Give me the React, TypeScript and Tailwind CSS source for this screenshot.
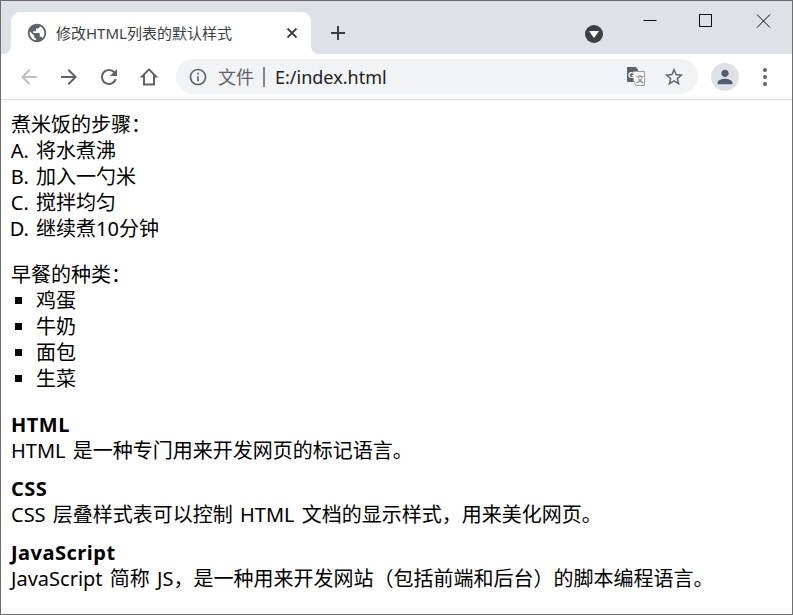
const UI = "font-['Noto_Sans','Noto_Sans_CJK_SC',sans-serif]";

function Icon({ d, size = 24, className = "" }: { d: string; size?: number; className?: string }) {
  return (
    <svg width={size} height={size} viewBox="0 0 24 24" fill="currentColor" className={`shrink-0 ${className}`}>
      <path d={d} />
    </svg>
  );
}

const GLOBE = "M12 2C6.48 2 2 6.48 2 12s4.48 10 10 10 10-4.48 10-10S17.52 2 12 2zm-1 17.93c-3.95-.49-7-3.85-7-7.93 0-.62.08-1.21.21-1.79L9 15v1c0 1.1.9 2 2 2v1.93zm6.9-2.54c-.26-.81-1-1.39-1.9-1.39h-1v-3c0-.55-.45-1-1-1H8v-2h2c.55 0 1-.45 1-1V7h2c1.1 0 2-.9 2-2v-.41c2.93 1.19 5 4.06 5 7.41 0 2.08-.8 3.97-2.1 5.39z";
const BACK = "M20 11H7.83l5.59-5.59L12 4l-8 8 8 8 1.41-1.41L7.83 13H20v-2z";
const FORWARD = "M4 11h12.17l-5.59-5.59L12 4l8 8-8 8-1.41-1.41L16.17 13H4v-2z";
const RELOAD = "M17.65 6.35C16.2 4.9 14.21 4 12 4c-4.42 0-7.99 3.58-7.99 8s3.57 8 7.99 8c3.73 0 6.84-2.55 7.73-6h-2.08c-.82 2.33-3.04 4-5.65 4-3.31 0-6-2.69-6-6s2.69-6 6-6c1.66 0 3.14.69 4.22 1.78L13 11h7V4l-2.35 2.35z";
const INFO = "M11 7h2v2h-2zm0 4h2v6h-2zm1-9C6.48 2 2 6.48 2 12s4.48 10 10 10 10-4.48 10-10S17.52 2 12 2zm0 18c-4.41 0-8-3.59-8-8s3.59-8 8-8 8 3.59 8 8-3.59 8-8 8z";
const STAR = "M22 9.24l-7.19-.62L12 2 9.19 8.63 2 9.24l5.46 4.73L5.82 21 12 17.27 18.18 21l-1.63-7.03L22 9.24zM12 15.4l-3.76 2.27 1-4.28-3.32-2.88 4.38-.38L12 6.1l1.71 4.04 4.38.38-3.32 2.88 1 4.28L12 15.4z";
const PERSON = "M12 12c2.21 0 4-1.79 4-4s-1.79-4-4-4-4 1.79-4 4 1.79 4 4 4zm0 2c-2.67 0-8 1.34-8 4v2h16v-2c0-2.66-5.33-4-8-4z";

function TabStrip() {
  return (
    <div className="flex h-[53px] bg-[#dee1e6]">
      <div className="relative ml-[10px] mt-[11px] flex h-[42px] w-[300px] items-center rounded-t-[9px] bg-white pl-[15px] pr-[13px]">
        <div className="absolute -left-[8px] bottom-0 h-[8px] w-[8px] bg-white">
          <div className="h-full w-full rounded-br-[8px] bg-[#dee1e6]" />
        </div>
        <div className="absolute -right-[8px] bottom-0 h-[8px] w-[8px] bg-white">
          <div className="h-full w-full rounded-bl-[8px] bg-[#dee1e6]" />
        </div>
        <Icon d={GLOBE} size={22} className="text-[#5f6368]" />
        <span className="ml-[8px] flex-1 text-[15px] leading-none text-[#3c4043]">修改HTML列表的默认样式</span>
        <svg width="12" height="12" viewBox="0 0 12 12" className="text-[#3c4043]">
          <path d="M1.5 1.5l9 9M10.5 1.5l-9 9" stroke="currentColor" strokeWidth="1.8" fill="none" />
        </svg>
      </div>
      <svg width="16" height="16" viewBox="0 0 16 16" className="ml-[19px] mt-[24px] text-[#3c4043]">
        <path d="M8 1v14M1 8h14" stroke="currentColor" strokeWidth="2" fill="none" />
      </svg>
      <div className="ml-[239px] mt-[24px] flex h-[18px] w-[18px] items-center justify-center rounded-full bg-[#3c4043]">
        <svg width="10" height="7" viewBox="0 0 10 7">
          <path d="M0 0h10L5 7z" fill="#fff" />
        </svg>
      </div>
      <div className="ml-[40px] flex">
        <svg width="14" height="14" viewBox="0 0 14 14" className="mt-[12px]">
          <path d="M0.5 7.5h13" stroke="#111" strokeWidth="1" fill="none" />
        </svg>
        <svg width="13" height="13" viewBox="0 0 13 13" className="ml-[42px] mt-[13px]">
          <rect x="0.5" y="0.5" width="12" height="12" stroke="#111" strokeWidth="1" fill="none" />
        </svg>
        <svg width="15" height="14" viewBox="0 0 15 14" className="ml-[44px] mt-[13px]">
          <path d="M1 0.5l13 13M14 0.5l-13 13" stroke="#111" strokeWidth="1" fill="none" />
        </svg>
      </div>
    </div>
  );
}

function Toolbar() {
  return (
    <div className="flex h-[46px] items-center border-b border-[#dadce0] bg-white">
      <Icon d={BACK} className="ml-[16px] text-[#bdc1c6]" />
      <Icon d={FORWARD} className="ml-[16px] text-[#5f6368]" />
      <Icon d={RELOAD} className="ml-[16px] text-[#5f6368]" />
      <svg width="24" height="24" viewBox="0 0 24 24" className="ml-[16px] shrink-0 text-[#5f6368]">
        <path d="M12 4.4 L5 11.5 H7 V19.5 H17 V11.5 H19 Z" fill="none" stroke="currentColor" strokeWidth="2" strokeLinejoin="miter" />
      </svg>
      <div className="ml-[15px] flex h-[35px] w-[522px] items-center rounded-full bg-[#f1f3f4] pl-[12px]">
        <Icon d={INFO} size={20} className="text-[#5f6368]" />
        <span className="ml-[10px] text-[18px] leading-none text-[#5f6368]">文件</span>
        <span className="ml-[9px] h-[20px] w-[2px] bg-[#80868b]" />
        <span className="ml-[10px] text-[18px] leading-none text-[#202124]">E:/index.html</span>
        <svg width="21" height="21" viewBox="0 0 21 21" className="ml-auto shrink-0">
          <path d="M2 1h9l2 3v12H3.5A1.5 1.5 0 0 1 2 14.5z" fill="#5f6368" />
          <path d="M8.5 5.5h11v14h-9l-2-5z" fill="#f1f3f4" stroke="#9aa0a6" strokeWidth="1" />
          <text x="3" y="11.5" fontSize="9" fontWeight="700" fill="#fff" fontFamily="Liberation Sans">G</text>
          <text x="11" y="15.5" fontSize="8" fill="#5f6368" fontFamily="Noto Sans CJK SC">文</text>
        </svg>
        <Icon d={STAR} size={22} className="ml-[17px] mr-[13px] text-[#5f6368]" />
      </div>
      <div className="ml-[13px] flex h-[28px] w-[28px] items-center justify-center rounded-full bg-[#dee1e6]">
        <Icon d={PERSON} size={22} className="text-[#505b70]" />
      </div>
      <div className="ml-[24px] flex flex-col gap-[3px]">
        <span className="h-[4px] w-[4px] rounded-full bg-[#5f6368]" />
        <span className="h-[4px] w-[4px] rounded-full bg-[#5f6368]" />
        <span className="h-[4px] w-[4px] rounded-full bg-[#5f6368]" />
      </div>
    </div>
  );
}

function Page() {
  return (
    <div className="flex-1 bg-white pl-[10px] pt-[12px] text-[20px] leading-[26px] text-black [word-spacing:2px]">
      <p>{"煮米饭的步骤\uFF1A"}</p>
      <ol className="list-[upper-alpha] pl-[25px]">
        <li>将水煮沸</li>
        <li>加入一勺米</li>
        <li>搅拌均匀</li>
        <li>继续煮10分钟</li>
      </ol>
      <p className="mt-[20px]">{"早餐的种类\uFF1A"}</p>
      <ul className="list-[square] pl-[25px]">
        <li>鸡蛋</li>
        <li>牛奶</li>
        <li>面包</li>
        <li>生菜</li>
      </ul>
      <dl className="mt-[20px]">
        <dt className="font-bold tracking-[0.5px]">HTML</dt>
        <dd>HTML 是一种专门用来开发网页的标记语言。</dd>
        <dt className="mt-[12px] font-bold tracking-[0.5px]">CSS</dt>
        <dd>{"CSS 层叠样式表可以控制 HTML 文档的显示样式\uFF0C用来美化网页。"}</dd>
        <dt className="mt-[12px] font-bold tracking-[0.5px]">JavaScript</dt>
        <dd>{"JavaScript 简称 JS\uFF0C是一种用来开发网站\uFF08包括前端和后台\uFF09的脚本编程语言。"}</dd>
      </dl>
    </div>
  );
}

export default function App() {
  return (
    <div className={`flex h-[615px] w-[793px] flex-col overflow-hidden border border-[#6e6e6e] ${UI}`}>
      <TabStrip />
      <Toolbar />
      <Page />
    </div>
  );
}
